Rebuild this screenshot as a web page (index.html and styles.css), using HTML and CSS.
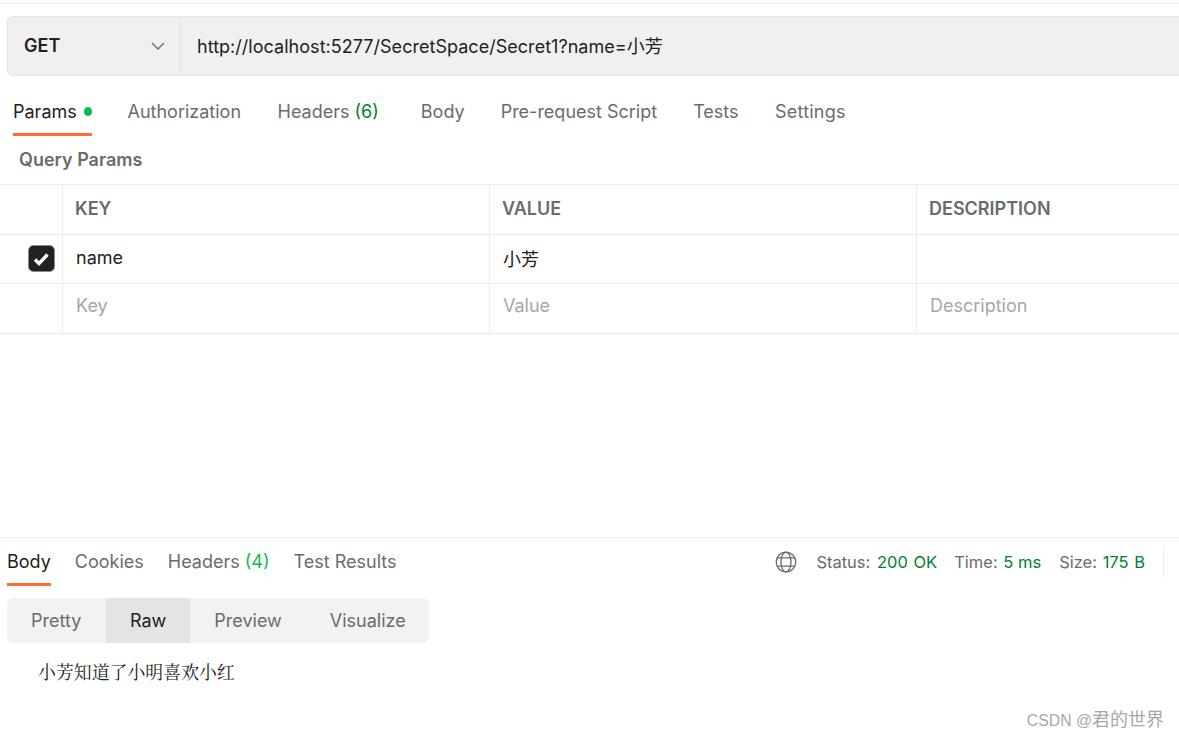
FILE: index.html
```html
<!DOCTYPE html>
<html lang="zh">
<head>
<meta charset="utf-8">
<title>Request</title>
<link rel="stylesheet" href="styles.css">
</head>
<body>
<div class="page">
  <div class="topline"></div>
  <div class="urlbar">
    <div class="method"><span>GET</span>
      <svg class="chev" width="14" height="14" viewBox="0 0 14 14"><path d="M1 4 7 10l6-6" fill="none" stroke="#6b6b6b" stroke-width="1.400"/></svg>
    </div>
    <div class="url">http://localhost:5277/SecretSpace/Secret1?name=小芳</div>
  </div>
  <nav class="tabs req-tabs">
    <div class="tab active params">Params<i class="dot"></i></div>
    <div class="tab auth">Authorization</div>
    <div class="tab hdr">Headers <b class="count">(6)</b></div>
    <div class="tab body-tab">Body</div>
    <div class="tab pre">Pre-request Script</div>
    <div class="tab tests">Tests</div>
    <div class="tab settings">Settings</div>
  </nav>
  <div class="qp">Query Params</div>
  <div class="table">
    <div class="row head">
      <div class="c c0"></div><div class="c c1">KEY</div><div class="c c2">VALUE</div><div class="c c3">DESCRIPTION</div>
    </div>
    <div class="row">
      <div class="c c0"><svg width="27" height="27" viewBox="0 0 27 27"><rect x="0.500" y="0.500" width="26" height="26" rx="5" fill="#212121" stroke="#8a8a8a"/><path d="M7 14.500l4 4 8.500-9" fill="none" stroke="#fff" stroke-width="3.400"/></svg></div>
      <div class="c c1 val">name</div><div class="c c2 val">小芳</div><div class="c c3"></div>
    </div>
    <div class="row ph">
      <div class="c c0"></div><div class="c c1 val">Key</div><div class="c c2 val">Value</div><div class="c c3 val">Description</div>
    </div>
  </div>
  <div class="spacer"></div>
  <div class="resp">
    <nav class="tabs resp-tabs">
      <div class="tab active">Body</div>
      <div class="tab">Cookies</div>
      <div class="tab">Headers <b class="count bright">(4)</b></div>
      <div class="tab">Test Results</div>
      <div class="meta">
        <svg class="globe" width="22" height="22" viewBox="0 0 22 22" fill="none" stroke="#6b6b6b" stroke-width="1.300"><circle cx="11" cy="11" r="9.800"/><ellipse cx="11" cy="11" rx="5" ry="9.800"/><path d="M2.500 6.800h17M2.500 15.200h17"/></svg>
        <span class="m m-status">Status: <em>200 OK</em></span>
        <span class="m m-time">Time: <em>5 ms</em></span>
        <span class="m">Size: <em>175 B</em></span>
        <span class="sep"></span>
      </div>
    </nav>
    <div class="toggle">
      <div class="opt pretty">Pretty</div>
      <div class="opt on">Raw</div>
      <div class="opt">Preview</div>
      <div class="opt">Visualize</div>
    </div>
    <div class="output">小芳知道了小明喜欢小红</div>
  </div>
</div>
<div class="mark"><span class="mark-latin">CSDN @</span>君的世界</div>
</body>
</html>
```
FILE: styles.css
```css
* { box-sizing: border-box; }
html, body { margin: 0; padding: 0; background: #fff; }
body { width: 1179px; height: 738px; overflow: hidden; position: relative; font-family: Inter, "Noto Sans CJK SC", sans-serif; font-size: 18px; color: #6b6b6b; }
.page { height: 738px; display: flex; flex-direction: column; }
.topline { height: 1px; margin-top: 3px; background: #ededed; flex: none; }
.urlbar { flex: none; margin: 12px -20px 0 7px; height: 60px; display: flex; background: #f0f0f0; border: 1px solid #e6e6e6; border-radius: 5px; }
.method { width: 173px; border-right: 1px solid #e2e2e2; display: flex; align-items: center; justify-content: space-between; padding: 0 15px 2px 16px; font-weight: 600; color: #212121; }
.chev { margin-top: 2px; }
.url { padding: 0 16px 3px; display: flex; align-items: center; color: #212121; white-space: nowrap; letter-spacing: .03px; }
.tabs { display: flex; flex: none; }
.tab { white-space: nowrap; }
.req-tabs { padding-left: 13px; height: 60px; align-items: flex-start; padding-top: 25px; }
.req-tabs .tab { height: 35px; line-height: 22px; margin-right: 36px; }
.tab.active { color: #212121; border-bottom: 3px solid #ff6c37; }
.req-tabs .params { display: flex; width: 79px; margin-right: 35.500px; }
.req-tabs .auth { margin-right: 36.500px; }
.req-tabs .hdr { margin-right: 42px; }
.req-tabs .settings { letter-spacing: .2px; margin-left: .5px; }
.dot { width: 9px; height: 9px; border-radius: 50%; background: #0cbb52; margin: 6px 0 0 7px; }
.count { font-weight: 400; color: #007f31; }
.count.bright { color: #0cbb52; }
.qp { flex: none; height: 48px; padding: 13px 0 0 19px; line-height: 22px; font-weight: 600; }
.table { flex: none; border-top: 1px solid #ededed; }
.row { display: flex; height: 49.500px; border-bottom: 1px solid #ededed; }
.c { display: flex; align-items: center; padding-left: 13px; border-right: 1px solid #ededed; }
.c0 { width: 63px; padding-left: 28px; }
.c1, .c2 { width: 427px; }
.c3 { flex: 1; border-right: 0; }
.head .c { font-weight: 600; padding: 0 0 2px 12px; }
.val { color: #212121; padding-bottom: 2px; }
.ph .val { color: #a6a6a6; padding-bottom: 5px; }
.spacer { flex: 1; }
.resp { flex: none; height: 201px; border-top: 1px solid #ededed; }
.resp-tabs { height: 60px; padding: 12px 0 0 7px; align-items: flex-start; }
.resp-tabs .tab { height: 36px; line-height: 24px; margin-right: 24px; }
.meta { margin-left: auto; display: flex; align-items: flex-start; }
.globe { margin: 1px 19px 0 1px; }
.m { font-size: 16.500px; line-height: 24px; margin-right: 18px; }
.m em { font-style: normal; color: #007f31; margin-left: 1px; word-spacing: 1px; }
.m-status { margin-right: 17px; }
.m-status em { margin-left: 2px; }
.m-time em { word-spacing: 0; }
.sep { width: 1px; height: 30px; background: #ededed; margin: -3px 15px 0 0; }
.toggle { margin-left: 7px; width: 422px; height: 45px; background: #f2f2f2; border-radius: 6px; display: flex; overflow: hidden; }
.opt { flex: none; display: flex; align-items: center; padding: 0 24px; }
.opt.pretty { width: 99px; }
.opt.on { background: #e4e4e4; color: #212121; }
.output { margin: 18px 0 0 38px; line-height: 21px; font-size: 17.900px; font-family: "Noto Serif CJK SC", "Liberation Serif", "Noto Sans CJK SC", serif; color: #222; }
.mark { position: absolute; right: 15px; top: 708px; font-size: 18px; line-height: 24px; color: #a8a8a8; font-family: "Liberation Sans", "Noto Sans CJK SC", sans-serif; }
.mark-latin { font-size: 15.800px; }
```
